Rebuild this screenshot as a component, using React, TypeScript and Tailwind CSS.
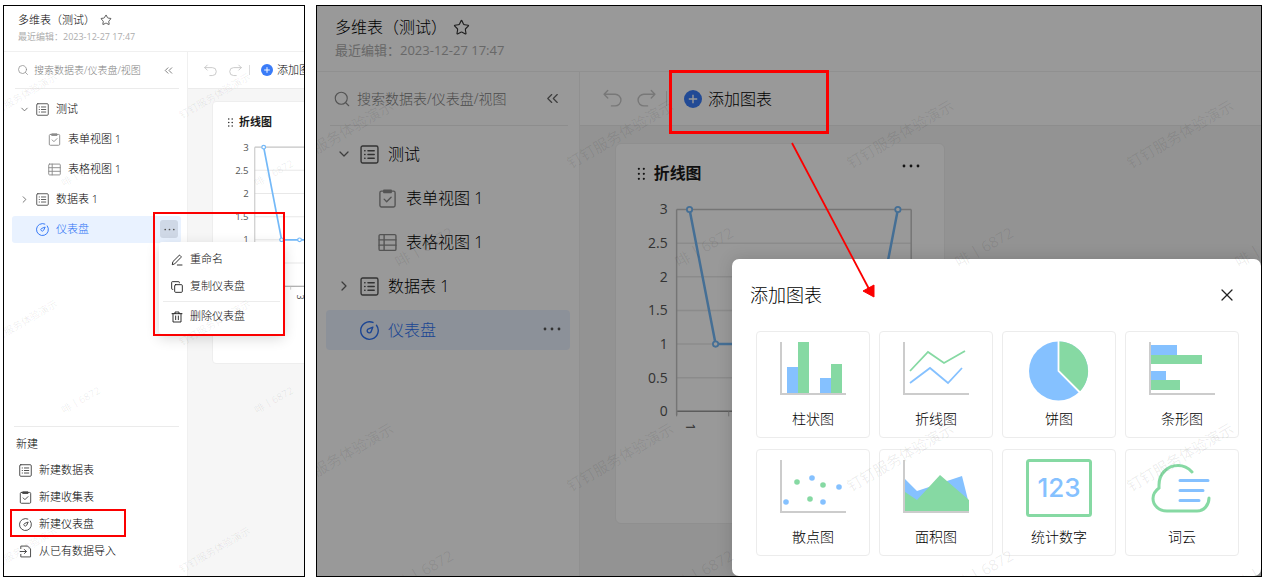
import type { ReactNode } from "react";
import { ChevronDown, ChevronRight, ChevronsLeft, Search, Star, X } from "lucide-react";

const BLUE = "#85c1ff";
const GREEN = "#86d9a3";
const AXIS = "#cccccc";

/* Class sets for the compact and the enlarged window */
const compact = {
  header: "h-[46px] px-[14px] pt-[6px]",
  title: "text-[11px] leading-[16px] gap-[8px]",
  star: "w-[12px] h-[12px]",
  subtitle: "text-[9px] leading-[14px] mt-[2px]",
  sidebar: "w-[184px]",
  search: "h-[37px] ml-[11px] mr-[8px] pl-[2px] pr-[4px] gap-[5px] text-[10px]",
  searchIcon: "w-[12px] h-[12px]",
  collapse: "w-[13px] h-[13px]",
  tree: "pt-[7px] gap-[3px] pl-[8px] pr-[6px]",
  row: "h-[27px] pl-[7px] rounded-[3px] text-[11px]",
  arrow: "w-[11px] h-[11px] mr-[6px]",
  icon: "w-[13px] h-[13px] mr-[7px]",
  indent: "w-[29px]",
  more: "w-[18px] h-[18px] right-[3px] top-[4px] bg-[#cfd8e6] rounded-[3px]",
  moreIcon: "w-[11px] h-[11px]",
  toolbar: "h-[37px] pl-[16px] text-[11px]",
  undo: "w-[13px] h-[13px]",
  undoGap: "gap-[12px]",
  divider: "h-[10px] ml-[7px] mr-[11px]",
  plus: "w-[12px] h-[12px] mr-[4px]",
  canvas: "pl-[24px] pt-[12px]",
  card: "w-[228px] rounded-[4px]",
  watermark: { size: 10, dx: 193, dy: 227, cols: 2, rows: 3, x: -15, y: 113, x2: 60, y2: 181 },
};

const enlarged: typeof compact = {
  header: "h-[66px] px-[18px] pt-[10px]",
  title: "text-[16px] leading-[22px] gap-[9px]",
  star: "w-[17px] h-[17px]",
  subtitle: "text-[13px] leading-[18px] mt-[3px]",
  sidebar: "w-[263px]",
  search: "h-[54px] ml-[13px] mr-[11px] pl-[3px] pr-[6px] gap-[6px] text-[14px]",
  searchIcon: "w-[18px] h-[18px]",
  collapse: "w-[19px] h-[19px]",
  tree: "pt-[8px] gap-[4px] pl-[9px] pr-[9px]",
  row: "h-[40px] pl-[10px] rounded-[4px] text-[16px]",
  arrow: "w-[16px] h-[16px] mr-[8px]",
  icon: "w-[19px] h-[19px] mr-[9px]",
  indent: "w-[42px]",
  more: "w-[24px] h-[24px] right-[6px] top-[7px]",
  moreIcon: "w-[18px] h-[18px]",
  toolbar: "h-[54px] pl-[23px] text-[16px]",
  undo: "w-[19px] h-[19px]",
  undoGap: "gap-[15px]",
  divider: "h-[15px] ml-[10px] mr-[17px]",
  plus: "w-[18px] h-[18px] mr-[6px]",
  canvas: "pl-[35px] pt-[17px]",
  card: "w-[330px] rounded-[6px]",
  watermark: { size: 15, dx: 280, dy: 323, cols: 4, rows: 2, x: -26, y: 163, x2: 82, y2: 262 },
};

type Sizes = typeof compact;

function Glyph({ className, children }: { className?: string; children: ReactNode }) {
  return (
    <svg viewBox="0 0 18 18" fill="none" stroke="currentColor" strokeWidth="1.3" strokeLinecap="round" strokeLinejoin="round" className={`shrink-0 ${className ?? ""}`} aria-hidden="true">
      {children}
    </svg>
  );
}

const SheetIcon = ({ className }: { className?: string }) => (
  <Glyph className={className}>
    <rect x="1" y="1" width="16" height="16" rx="1.5" />
    <path d="M7.5 5.5h6M7.5 9h6M7.5 12.5h6M4.4 5.5h.4M4.4 9h.4M4.4 12.5h.4" />
  </Glyph>
);

const FormIcon = ({ className }: { className?: string }) => (
  <Glyph className={className}>
    <rect x="1.8" y="2" width="14.4" height="15" rx="1.5" />
    <path d="M5.5 1.2h7v2.2h-7z" fill="currentColor" />
    <path d="M5.8 9.6l2.4 2.4 4.2-4.2" />
  </Glyph>
);

const GridIcon = ({ className }: { className?: string }) => (
  <Glyph className={className}>
    <rect x="1" y="1.5" width="16" height="15" rx="1.2" />
    <path d="M1 6.5h16M1 11.5h16M5.8 1.5v15" />
  </Glyph>
);

const DashboardIcon = ({ className }: { className?: string }) => (
  <Glyph className={className}>
    <path d="M12.3 1.4A8.3 8.3 0 1 0 15.6 4" />
    <path d="M12.2 5.8L7.6 7.6a2 2 0 1 0 2.8 2.8z" />
  </Glyph>
);

const ImportIcon = ({ className }: { className?: string }) => (
  <Glyph className={className}>
    <path d="M2.5 5V1.5H12L16 5.5V16.5H2.5V13" />
    <path d="M1.5 9H10M7.5 6.2L10.3 9L7.5 11.8" />
  </Glyph>
);

const RenameIcon = ({ className }: { className?: string }) => (
  <Glyph className={className}>
    <path d="M2 15.5l.8-4L12 2.3a1.2 1.2 0 0 1 1.7 0l1.2 1.2a1.2 1.2 0 0 1 0 1.7L5.8 14.500zM9.5 16.5h7" />
  </Glyph>
);

const CopyIcon = ({ className }: { className?: string }) => (
  <Glyph className={className}>
    <rect x="5.5" y="5.5" width="11.5" height="11.5" rx="1.5" />
    <path d="M2.8 12.5H2A1 1 0 0 1 1 11.5V2A1 1 0 0 1 2 1h9.5a1 1 0 0 1 1 1v.8" />
  </Glyph>
);

const TrashIcon = ({ className }: { className?: string }) => (
  <Glyph className={className}>
    <path d="M1.5 4h15M6 4V1.5h6V4M3 4v12.5h12V4M7 7.5V13M11 7.5V13" />
  </Glyph>
);

const MoreIcon = ({ className }: { className?: string }) => (
  <svg viewBox="0 0 18 18" className={className} fill="currentColor" aria-hidden="true">
    <circle cx="2" cy="9" r="1.4" />
    <circle cx="9" cy="9" r="1.4" />
    <circle cx="16" cy="9" r="1.4" />
  </svg>
);

const UndoIcon = ({ className }: { className?: string }) => (
  <Glyph className={className}>
    <path d="M4.5 1.5L1 5L4.5 8.5M1 5H11.5A5.5 5.5 0 0 1 11.5 16H8" />
  </Glyph>
);

const treeItems = [
  { label: "测试", icon: SheetIcon, arrow: "down" },
  { label: "表单视图 1", icon: FormIcon, child: true },
  { label: "表格视图 1", icon: GridIcon, child: true },
  { label: "数据表 1", icon: SheetIcon, arrow: "right" },
  { label: "仪表盘", icon: DashboardIcon, active: true },
];

const createItems = [
  { label: "新建数据表", icon: SheetIcon },
  { label: "新建收集表", icon: FormIcon },
  { label: "新建仪表盘", icon: DashboardIcon, marked: true },
  { label: "从已有数据导入", icon: ImportIcon },
];

function LineChart() {
  const values = [3, 1, 1, 1, 1, 1, 1, 1, 3];
  const px = (i: number) => 74 + i * 26.2;
  const py = (v: number) => 269 - v * 67.7;
  return (
    <svg viewBox="0 0 330 381" className="block w-full font-normal" role="img" aria-label="折线图">
      <g fill="#222">
        {[25, 30, 35].map((y) => (
          <g key={y}>
            <circle cx="23" cy={y} r="1.1" />
            <circle cx="28" cy={y} r="1.1" />
          </g>
        ))}
      </g>
      <text x="38" y="35" fontSize="16" fontWeight="700" fill="#1a1a1a">折线图</text>
      {[0, 0.5, 1, 1.5, 2, 2.5, 3].map((v) => (
        <g key={v}>
          <path d={`M61 ${py(v)}H297`} stroke={v === 0 ? "#9a9a9a" : v === 3 ? "#c4c4c4" : "#e8e8e8"} strokeWidth="1.5" />
          <text x="52" y={py(v) + 5} fontSize="14" textAnchor="end" fill="#555">{v}</text>
        </g>
      ))}
      <path d="M61 66V273M297 66V273" stroke="#c4c4c4" strokeWidth="1.5" />
      {/* every second category is labelled */}
      {[0, 2, 4, 6, 8].map((i) => (
        <g key={i}>
          <path d={`M${61 + i * 26.2} 269v5`} stroke="#bbb" />
          <text transform={`translate(${px(i) - 4} 281) rotate(90)`} fontSize="13" fill="#444">{i + 1}</text>
        </g>
      ))}
      <polyline points={values.map((v, i) => `${px(i)},${py(v)}`).join(" ")} fill="none" stroke="#74b9f8" strokeWidth="2.5" />
      {values.map((v, i) => (
        <circle key={i} cx={px(i)} cy={py(v)} r="2.7" fill="#fff" stroke="#74b9f8" strokeWidth="1.8" />
      ))}
    </svg>
  );
}

function Watermark({ s }: { s: Sizes }) {
  const w = s.watermark;
  const tiles = Array.from({ length: w.cols * w.rows }, (_, i) => ({ col: i % w.cols, row: Math.floor(i / w.cols) }));
  return (
    <svg className="absolute inset-0 w-full h-full pointer-events-none z-30 font-normal" fill="#000" fillOpacity="0.08" fontSize={w.size} aria-hidden="true">
      {tiles.map(({ col, row }) => (
        <g key={`${col}-${row}`}>
          <text transform={`translate(${w.x + col * w.dx} ${w.y + row * w.dy}) rotate(-30)`}>钉钉服务体验演示</text>
          {row < 2 && <text transform={`translate(${w.x2 + col * w.dx} ${w.y2 + row * w.dy}) rotate(-30)`}>啡丨6872</text>}
        </g>
      ))}
    </svg>
  );
}

function RowMenu() {
  const item = "flex items-center w-full h-[27px] pl-[12px] text-[11px]";
  return (
    <div className="absolute left-[147px] top-[26px] w-[125px] py-[4px] bg-white rounded-[3px] text-[#111] shadow-[0_4px_14px_rgba(0,0,0,0.16)] z-20">
      <button className={item}><RenameIcon className="w-[12px] h-[12px] mr-[7px]" />重命名</button>
      <button className={item}><CopyIcon className="w-[12px] h-[12px] mr-[7px]" />复制仪表盘</button>
      <div className="h-px mx-[4px] my-px bg-[#ececec]" />
      <button className={item}><TrashIcon className="w-[12px] h-[12px] mr-[7px]" />删除仪表盘</button>
    </div>
  );
}

function Workspace({ s, id, menu }: { s: Sizes; id: string; menu?: boolean }) {
  return (
    <div className="flex flex-col grow min-w-0">
      <header className={`border-b border-[#f0f0f0] ${s.header}`}>
        <div className={`flex items-center text-black ${s.title}`}>
          <h1>多维表（测试）</h1>
          <button className="-ml-[3px] text-[#333]" aria-label="收藏"><Star className={s.star} strokeWidth={1.6} /></button>
        </div>
        <p className={`font-normal text-[#adadad] ${s.subtitle}`}>最近编辑：2023-12-27 17:47</p>
      </header>

      <div className="flex grow">
        {/* Sidebar */}
        <aside className={`flex flex-col shrink-0 border-r border-[#f0f0f0] ${s.sidebar}`}>
          <div className={`flex items-center border-b border-[#ebebeb] text-[#8c8c8c] ${s.search}`}>
            <label htmlFor={id} aria-label="搜索"><Search className={s.searchIcon} strokeWidth={1.5} /></label>
            <input id={id} type="text" placeholder="搜索数据表/仪表盘/视图" className="grow min-w-0 bg-transparent outline-none placeholder:text-[#808080]" />
            <button className="text-[#666]" aria-label="收起"><ChevronsLeft className={s.collapse} strokeWidth={1.5} /></button>
          </div>
          <ul className={`flex flex-col text-black ${s.tree}`}>
            {treeItems.map((t) => (
              <li key={t.label} className="relative">
                <button className={`flex items-center w-full ${s.row} ${t.active ? "bg-[#e9f2ff] text-[#2f74f5]" : ""}`}>
                  {t.child && <span className={s.indent} />}
                  {t.arrow === "down" && <ChevronDown className={`text-[#666] ${s.arrow}`} strokeWidth={1.9} />}
                  {t.arrow === "right" && <ChevronRight className={`text-[#666] ${s.arrow}`} strokeWidth={1.9} />}
                  {t.active && <span className={s.arrow} />}
                  <t.icon className={`${s.icon} ${t.child ? "text-[#8c8c8c]" : t.active ? "" : "text-[#555]"}`} />
                  {t.label}
                </button>
                {t.active && (
                  <button className={`absolute flex items-center justify-center text-[#555] ${s.more}`} aria-label="更多">
                    <MoreIcon className={s.moreIcon} />
                  </button>
                )}
                {t.active && menu && (
                  <>
                    <RowMenu />
                    <div className="absolute left-[141px] -top-[4px] w-[132px] h-[124px] border-2 border-[#fb0000] z-40 pointer-events-none" />
                  </>
                )}
              </li>
            ))}
          </ul>

          {menu && (
            <div className="mt-auto ml-[10px] mr-[8px] pt-[3px] pb-[11px] border-t border-[#ebebeb] text-[11px] text-black">
              <h2 className="h-[27px] leading-[27px] pl-[2px]">新建</h2>
              <ul>
                {createItems.map((c) => (
                  <li key={c.label} className="relative">
                    <button className="flex items-center h-[27px] pl-[5px]">
                      <c.icon className="w-[13px] h-[13px] mr-[7px] text-[#444]" />
                      {c.label}
                    </button>
                    {c.marked && <div className="absolute -left-[4px] -top-[2px] w-[116px] h-[28px] border-2 border-[#fb0000] z-40 pointer-events-none" />}
                  </li>
                ))}
              </ul>
            </div>
          )}
        </aside>

        {/* Canvas */}
        <main className="grow min-w-0 bg-[#f6f6f6] overflow-hidden">
          <div className={`flex items-center bg-white border-b border-[#ebebeb] whitespace-nowrap ${s.toolbar}`}>
            <div className={`flex items-center shrink-0 text-[#c8c8c8] ${s.undoGap}`}>
              <button aria-label="撤销"><UndoIcon className={s.undo} /></button>
              <button aria-label="重做"><UndoIcon className={`-scale-x-100 ${s.undo}`} /></button>
            </div>
            <span className={`w-px shrink-0 bg-[#ddd] ${s.divider}`} />
            <button className="flex items-center shrink-0 text-black">
              <svg viewBox="0 0 18 18" className={`shrink-0 ${s.plus}`} aria-hidden="true">
                <circle cx="9" cy="9" r="9" fill="#3a7cf8" />
                <path d="M9 4.8V13.2M4.8 9H13.2" stroke="#fff" strokeWidth="1.4" />
              </svg>
              添加图表
            </button>
          </div>
          <div className={s.canvas}>
            <section className={`relative bg-white border border-[#eeeeee] ${s.card}`}>
              <LineChart />
              <button className="absolute right-[24px] top-[13px] text-[#222]" aria-label="图表菜单">
                <MoreIcon className={s.moreIcon} />
              </button>
            </section>
          </div>
        </main>
      </div>
    </div>
  );
}

const axes = <path d="M1 1V53H66" fill="none" stroke={AXIS} strokeWidth="2" />;

const chartTypes = [
  {
    label: "柱状图",
    art: (
      <>
        <path d="M7 26h11v27H7zM40 37h11v16H40z" fill={BLUE} />
        <path d="M18 1h11v52H18zM51 23h11v30H51z" fill={GREEN} />
        {axes}
      </>
    ),
  },
  {
    label: "折线图",
    art: (
      <>
        {axes}
        <path d="M7 30L25 11L41 22L62 10" fill="none" stroke={GREEN} strokeWidth="1.8" />
        <path d="M7 42L27 27L45 42L59 27" fill="none" stroke={BLUE} strokeWidth="1.8" />
      </>
    ),
  },
  {
    label: "饼图",
    art: (
      <>
        <circle cx="32.5" cy="30" r="29.5" fill={BLUE} />
        <path d="M32.5 30V.5A29.5 29.5 0 0 1 53.4 50.9z" fill={GREEN} />
        <path d="M32.5 0V30L54 51.5" fill="none" stroke="#fff" strokeWidth="1.8" />
      </>
    ),
  },
  {
    label: "条形图",
    art: (
      <>
        <path d="M2 4h26v10H2zM2 30h15v9H2z" fill={BLUE} />
        <path d="M2 14h51v9H2zM2 39h29v10H2z" fill={GREEN} />
        {axes}
      </>
    ),
  },
  {
    label: "散点图",
    art: (
      <>
        {axes}
        {[[6, 43], [32, 19], [59, 28], [43, 43]].map(([x, y]) => <circle key={x} cx={x} cy={y} r="2.8" fill={BLUE} />)}
        {[[17, 23], [43, 26], [30, 40]].map(([x, y]) => <circle key={x} cx={x} cy={y} r="2.8" fill={GREEN} />)}
      </>
    ),
  },
  {
    label: "面积图",
    art: (
      <>
        <path d="M2 20L14 32L59 17L65 41V53H2z" fill={BLUE} />
        <path d="M2 33L14 41L37 16L66 41V53H2z" fill={GREEN} />
        {axes}
      </>
    ),
  },
  {
    label: "统计数字",
    art: (
      <>
        <rect x="1.5" y="1.5" width="63" height="55" rx="2" fill="none" stroke={GREEN} strokeWidth="3" />
        <text x="33" y="38" fontSize="26" fontWeight="500" textAnchor="middle" fill={BLUE} className="font-['Inter',sans-serif]">123</text>
      </>
    ),
  },
  {
    label: "词云",
    art: (
      <>
        <path d="M43 13C39 8.5 34 6.5 29 6.5C18 6.5 10 15 10 26V29C6 32 4 35 4 39.5C4 46.5 10 52 18 52H48C55 52 60 46 60 39" fill="none" stroke={GREEN} strokeWidth="3" strokeLinecap="round" />
        <path d="M31 21.5H59M31 31.5H54M31 41.5H50" stroke={BLUE} strokeWidth="3" strokeLinecap="round" />
      </>
    ),
  },
];

function AddChartDialog() {
  return (
    <div role="dialog" aria-label="添加图表" className="absolute right-0 bottom-0 w-[529px] bg-white rounded-[7px] pl-[24px] pr-[22px] pb-[20px] z-20 shadow-[0_0_16px_rgba(0,0,0,0.15)]">
      <div className="flex items-center justify-between h-[72px] -ml-[6px] pr-[3px] text-black">
        <h2 className="text-[18px]">添加图表</h2>
        <button className="text-[#222]" aria-label="关闭"><X className="w-[20px] h-[20px] -mr-px" strokeWidth={1.5} /></button>
      </div>
      <div className="grid grid-cols-4 gap-x-[9px] gap-y-[11px]">
        {chartTypes.map((c) => (
          <button key={c.label} className="flex flex-col items-center h-[107px] pt-[9px] border border-[#ececec] rounded-[4px] text-[14px] text-black">
            <svg viewBox="0 0 66 60" className="w-[66px] h-[60px]" aria-hidden="true">{c.art}</svg>
            <span className="mt-[8px] leading-[20px]">{c.label}</span>
          </button>
        ))}
      </div>
    </div>
  );
}

export default function App() {
  return (
    <div className="flex gap-[11px] min-h-screen bg-white pl-[3px] pr-px pt-[5px] pb-px font-light font-['Open_Sans','Noto_Sans_CJK_SC',sans-serif]">
      <div className="relative flex shrink-0 w-[302px] border border-black bg-white overflow-hidden">
        <Workspace s={compact} id="search-compact" menu />
        <Watermark s={compact} />
      </div>

      <div className="relative flex grow min-w-0 border border-black bg-white overflow-hidden">
        <Workspace s={enlarged} id="search-enlarged" />
        <div className="absolute inset-0 bg-black/40 z-10" />
        <AddChartDialog />
        <Watermark s={enlarged} />
        {/* Callout from the toolbar button to the dialog */}
        <div className="absolute left-[352px] top-[64px] w-[160px] h-[64px] border-3 border-[#fb0000] z-40 pointer-events-none" />
        <svg className="absolute left-[470px] top-[134px] w-[96px] h-[164px] z-40 pointer-events-none" viewBox="0 0 96 164" aria-hidden="true">
          <path d="M5 3L82 149" stroke="#fb0000" strokeWidth="1.8" />
          <path d="M87 157L76 151L87 145z" fill="#fb0000" stroke="#fb0000" />
        </svg>
      </div>
    </div>
  );
}
